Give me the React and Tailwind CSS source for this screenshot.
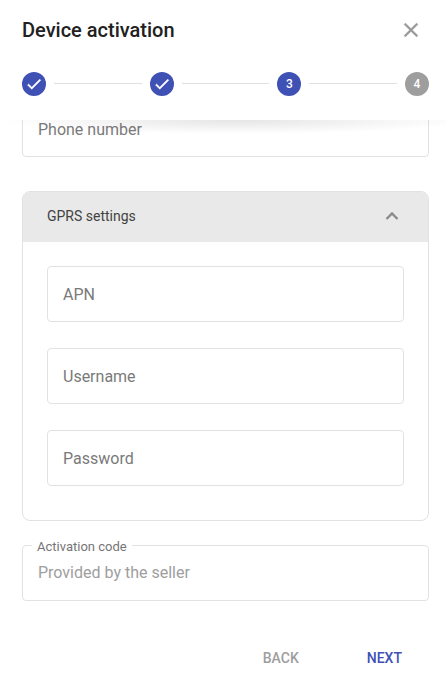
import { useId } from "react";

function Field({ label }) {
  const id = useId();
  return (
    <div className="relative h-14">
      <input
        id={id}
        type="text"
        placeholder=" "
        className="peer h-full w-full rounded border border-[#e2e2e2] bg-transparent px-[15px] text-base text-[#212121] outline-none focus:border-[#3f51b5]"
      />
      <label
        htmlFor={id}
        className="pointer-events-none absolute top-4 left-4 hidden text-base leading-[26px] text-[#7a7a7a] peer-placeholder-shown:block"
      >
        {label}
      </label>
    </div>
  );
}

function Step({ state, number }) {
  return (
    <li
      className={`flex size-6 shrink-0 items-center justify-center rounded-full text-xs font-medium text-white ${
        state === "todo" ? "bg-[#9e9e9e]" : "bg-[#3f51b5]"
      }`}
    >
      {state === "done" ? (
        <svg viewBox="0 0 24 24" className="size-[18px]" fill="#fff" aria-label="Done">
          <path
            d="M9 16.17 4.83 12l-1.42 1.41L9 19 21 7l-1.41-1.41z"
            stroke="#fff"
            strokeWidth="0.7"
          />
        </svg>
      ) : (
        number
      )}
    </li>
  );
}

function Line() {
  return <li aria-hidden="true" className="mx-2 mb-px h-px flex-1 bg-[#e0e0e0]" />;
}

export default function App() {
  return (
    <main className="min-h-screen bg-white font-[Roboto,sans-serif] text-[#212121]">
      <header className="relative z-10 h-30 bg-white pr-[17px] pl-[22px]">
        <div className="flex h-15 items-center justify-between">
          <h1 className="text-xl font-medium">Device activation</h1>
          <button type="button" aria-label="Close" className="mr-1.5">
            <svg viewBox="0 0 24 24" className="size-6" fill="#999" stroke="#999" strokeWidth="0.3">
              <path d="M19 6.41 17.59 5 12 10.59 6.41 5 5 6.41 10.59 12 5 17.59 6.41 19 12 13.41 17.59 19 19 17.59 13.41 12z" />
            </svg>
          </button>
        </div>
        <ol className="flex h-12 items-center">
          <Step state="done" />
          <Line />
          <Step state="done" />
          <Line />
          <Step state="active" number="3" />
          <Line />
          <Step state="todo" number="4" />
        </ol>
        <div className="pointer-events-none absolute inset-x-0 top-full h-[14px] bg-[radial-gradient(farthest-side_at_53%_0,rgba(0,0,0,0.1),transparent)]" />
      </header>

      <form className="-mt-[19px] pr-[17px] pl-[22px]">
        <Field label="Phone number" />

        <section className="mt-[34px] overflow-hidden rounded-lg border border-[#e2e2e2]">
          <button
            type="button"
            aria-expanded="true"
            className="flex h-[50px] w-full items-center justify-between bg-[#e9e9e9] px-6 pb-0.5 text-sm text-[#424242]"
          >
            GPRS settings
            <svg viewBox="0 0 24 24" className="size-6" fill="none" stroke="#8a8a8a" strokeWidth="2.3">
              <path d="M6.500 15 12 9.500l5.500 5.500" />
            </svg>
          </button>
          <div className="flex flex-col gap-[26px] px-6 pt-6 pb-[34px]">
            <Field label="APN" />
            <Field label="Username" />
            <Field label="Password" />
          </div>
        </section>

        <div className="relative mt-6 h-14">
          <label
            htmlFor="activation-code"
            className="absolute -top-2 left-2.5 bg-white px-[5px] text-[13px] leading-5 text-[#757575]"
          >
            Activation code
          </label>
          <input
            id="activation-code"
            type="text"
            placeholder="Provided by the seller"
            className="h-full w-full rounded border border-[#e2e2e2] bg-transparent px-[15px] pb-0.5 text-base text-[#212121] outline-none placeholder:text-[#9e9e9e] focus:border-[#3f51b5]"
          />
        </div>

        <div className="mt-[39px] flex justify-end gap-9 pr-[11px] text-sm font-medium">
          <button type="button" className="h-9 px-4 text-[#9e9e9e]">
            BACK
          </button>
          <button type="button" className="h-9 px-4 text-[#3f51b5]">
            NEXT
          </button>
        </div>
      </form>
    </main>
  );
}
